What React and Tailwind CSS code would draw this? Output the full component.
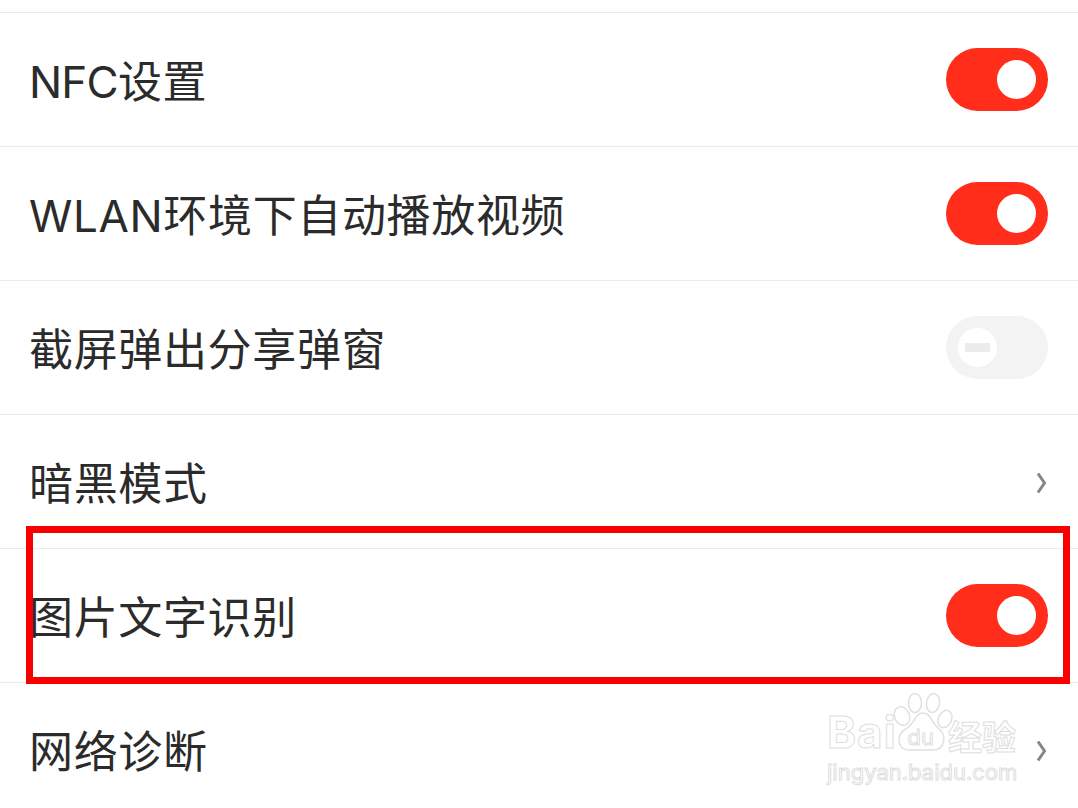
const Toggle = ({ disabled }) =>
  disabled ? (
    <div className="flex h-[63px] w-[102px] shrink-0 items-center rounded-full bg-[#f3f3f3] pl-[12px]">
      <div className="flex h-[39px] w-[39px] items-center justify-center rounded-full bg-white">
        <div className="h-[9px] w-[25px] bg-[#ececec]" />
      </div>
    </div>
  ) : (
    <div className="flex h-[63px] w-[102px] shrink-0 items-center justify-end rounded-full bg-[#ff2d1a] pr-[12px]">
      <div className="h-[39px] w-[39px] rounded-full bg-white" />
    </div>
  );

const Chevron = () => (
  <svg width="12" height="24" viewBox="0 0 12 24" className="mr-[1px] mt-[2px] shrink-0" fill="none">
    <path d="M3 2.5 L9.5 12 L3 21.5" stroke="#858585" strokeWidth="3" />
  </svg>
);

const rows = [
  [<><span className="tracking-[-0.8px]">NFC</span>设置</>, "on"],
  ["WLAN环境下自动播放视频", "on"],
  ["截屏弹出分享弹窗", "off"],
  ["暗黑模式", "arrow"],
  ["图片文字识别", "on"],
  ["网络诊断", "arrow"],
];

const Watermark = () => (
  <div className="absolute left-[827px] top-[692px] flex w-[200px] select-none flex-col text-white [-webkit-text-stroke:1px_#dedede]">
    <svg width="70" height="60" viewBox="0 0 70 60" className="absolute left-[56px] top-0" fill="#fff" stroke="#e0e0e0" strokeWidth="1.5">
      <ellipse cx="19" cy="24" rx="7.5" ry="9.5" transform="rotate(-25 19 24)" />
      <ellipse cx="32" cy="11" rx="6.5" ry="9.5" />
      <ellipse cx="50" cy="11" rx="6.5" ry="9.5" transform="rotate(10 50 11)" />
      <ellipse cx="62" cy="27" rx="6.5" ry="9" transform="rotate(25 62 27)" />
      <path d="M40 21 C48 21 48 31 56 37 C64 43 62 58 50 58 L26 58 C14 58 12 43 24 36 C32 31 32 21 40 21 Z" />
    </svg>
    <div className="relative flex h-[62px] items-end">
      <span className="font-['Inter',sans-serif] text-[44px] font-bold leading-none tracking-[1px]">Bai</span>
      <span className="ml-[11px] pb-[6px] font-['Inter',sans-serif] text-[22px] leading-none">du</span>
      <span className="ml-[14px] pb-[1px] font-['Noto_Sans_CJK_SC',sans-serif] text-[34px] font-bold leading-none">经验</span>
    </div>
    <span className="mt-[7px] font-['Inter',sans-serif] text-[22px] leading-none">jingyan.baidu.com</span>
  </div>
);

export default function App() {
  return (
    <div className="relative h-[808px] w-[1078px] overflow-hidden bg-white pt-[12px] font-['Inter','Noto_Sans_CJK_SC',sans-serif] text-[#2b2b2b]">
      {rows.map(([label, kind], i) => (
        <div key={i} className="flex h-[134px] items-center justify-between border-t border-[#ebebeb] pl-[29px] pr-[30px]">
          <span className="pt-[4px] text-[44px] leading-none tracking-[0.65px]">{label}</span>
          {kind === "arrow" ? <Chevron /> : <Toggle disabled={kind === "off"} />}
        </div>
      ))}
      <Watermark />
      <div className="absolute left-[26px] top-[526px] h-[158px] w-[1044px] border-[7px] border-[#f80000]" />
    </div>
  );
}
